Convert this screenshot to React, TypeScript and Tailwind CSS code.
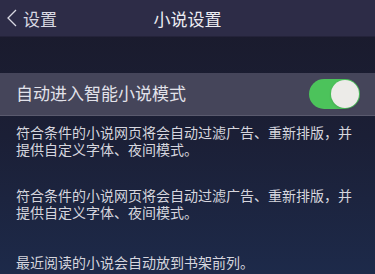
import { useState } from 'react'

const notes = [
  '符合条件的小说网页将会自动过滤广告、重新排版，并提供自定义字体、夜间模式。',
  '符合条件的小说网页将会自动过滤广告、重新排版，并提供自定义字体、夜间模式。',
  '最近阅读的小说会自动放到书架前列。',
]

export default function App() {
  const [on, setOn] = useState(true)

  return (
    <main
      className="w-[375px] h-[274px] overflow-hidden flex flex-col bg-gradient-to-b from-[#1a1a2b] via-[#1b1f36] to-[#1d2a4a] text-[#e4e4ec]"
      style={{ fontFamily: '"Noto Sans CJK SC", "Noto Sans", sans-serif' }}
    >
      {/* Nav bar */}
      <header className="relative h-[37px] shrink-0 flex items-center bg-[#2d2c47] border-b border-[#24233a]">
        <button className="flex items-center pl-[6px] text-[17px] leading-none text-[#d8d8e2]">
          <svg width="12" height="18" viewBox="0 0 12 18" fill="none" className="mr-[5px]">
            <path d="M10 1 L2 9 L10 17" stroke="#d8d8e2" strokeWidth="1.3" />
          </svg>
          设置
        </button>
        <h1 className="absolute left-1/2 -translate-x-1/2 text-[17px] leading-none text-[#ececf2]">小说设置</h1>
      </header>

      {/* Toggle row */}
      <div className="mt-[36px] h-[43px] shrink-0 flex items-center justify-between pl-[16px] pr-[15px] bg-[#45455a] border-b border-[#5a5a6e]">
        <span className="text-[17px] leading-none text-[#e2e2ea] -mt-[4px]">自动进入智能小说模式</span>
        <button
          onClick={() => setOn(!on)}
          className={`w-[51px] h-[30px] rounded-full flex items-center px-[1px] ${on ? 'bg-[#4cc35b] justify-end' : 'bg-[#6a6a7c] justify-start'}`}
        >
          <span className="w-[28px] h-[28px] rounded-full bg-[#ecebe8] shadow" />
        </button>
      </div>

      {/* Notes */}
      <div className="flex flex-col pl-[16px] pr-[12px] pt-[8px] gap-[30px] text-[14px] leading-[16.5px] text-[#d6d6de]">
        {notes.map((n, i) => (
          <p key={i} className={i === 2 ? 'mt-[4px]' : ''}>{n}</p>
        ))}
      </div>
    </main>
  )
}
